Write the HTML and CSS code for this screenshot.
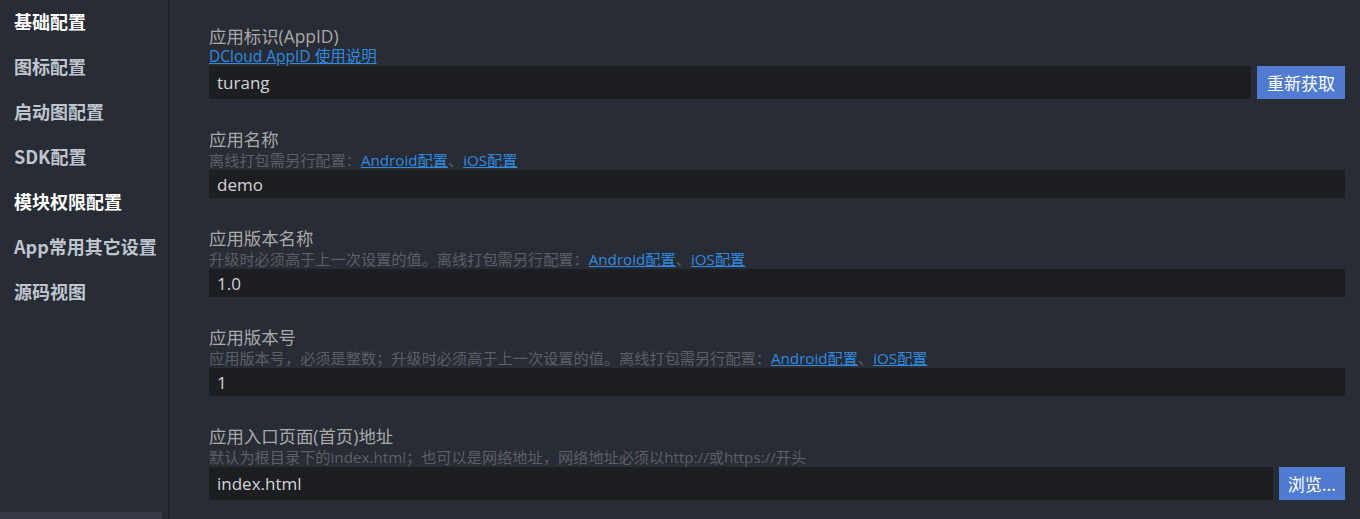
FILE: index.html
```html
<!DOCTYPE html>
<html lang="zh-CN">
<head>
    <meta charset="UTF-8">
    <meta name="viewport" content="width=device-width, initial-scale=1.0">
    <title>manifest.json</title>
    <link rel="stylesheet" href="styles.css">
</head>
<body>
    <div class="layout">
        <!-- Left navigation -->
        <nav class="sidebar">
            <ul class="nav">
                <li class="active">基础配置</li>
                <li>图标配置</li>
                <li>启动图配置</li>
                <li>SDK配置</li>
                <li class="active">模块权限配置</li>
                <li>App常用其它设置</li>
                <li>源码视图</li>
            </ul>
            <div class="scroll-thumb"></div>
        </nav>

        <!-- Settings form -->
        <main class="content">
            <div class="field">
                <div class="field-title first">应用标识(AppID)</div>
                <div class="field-desc first"><a href="#">DCloud AppID 使用说明</a></div>
                <div class="field-row">
                    <input class="tall" type="text" value="turang">
                    <button>重新获取</button>
                </div>
            </div>

            <div class="field">
                <div class="field-title">应用名称</div>
                <div class="field-desc">离线打包需另行配置：<a href="#">Android配置</a>、<a href="#">iOS配置</a></div>
                <div class="field-row">
                    <input type="text" value="demo">
                </div>
            </div>

            <div class="field">
                <div class="field-title">应用版本名称</div>
                <div class="field-desc">升级时必须高于上一次设置的值。离线打包需另行配置：<a href="#">Android配置</a>、<a href="#">iOS配置</a></div>
                <div class="field-row">
                    <input type="text" value="1.0">
                </div>
            </div>

            <div class="field">
                <div class="field-title">应用版本号</div>
                <div class="field-desc">应用版本号，必须是整数；升级时必须高于上一次设置的值。离线打包需另行配置：<a href="#">Android配置</a>、<a href="#">iOS配置</a></div>
                <div class="field-row">
                    <input type="text" value="1">
                </div>
            </div>

            <div class="field">
                <div class="field-title">应用入口页面(首页)地址</div>
                <div class="field-desc">默认为根目录下的index.html；也可以是网络地址，网络地址必须以http://或https://开头</div>
                <div class="field-row">
                    <input class="tall" type="text" value="index.html">
                    <button class="browse">浏览...</button>
                </div>
            </div>
        </main>
    </div>
</body>
</html>
```

FILE: styles.css
```css
body {
    margin: 0;
    padding: 0;
    background-color: #282c34;
    font-family: "Open Sans", "Noto Sans CJK SC", sans-serif;
    overflow: hidden;
}
.layout {
    display: flex;
    height: 519px;
}
.sidebar {
    width: 168px;
    flex-shrink: 0;
    border-right: 1px solid #1c1f24;
    display: flex;
    flex-direction: column;
}
.nav {
    list-style: none;
    margin: 0;
    padding: 0;
}
.nav li {
    padding: 9px 0 12px 14px;
    line-height: 24px;
    font-size: 18px;
    font-weight: bold;
    color: #bfc5cf;
    font-family: "Noto Sans CJK SC", sans-serif;
}
.nav li.active {
    color: #ffffff;
}
.scroll-thumb {
    margin-top: auto;
    width: 162px;
    height: 7px;
    background-color: #363b47;
}
.content {
    flex: 1;
    padding: 26px 15px 0 40px;
}
.field {
    margin-bottom: 29px;
}
.field-title {
    font-size: 17.4px;
    line-height: 22px;
    color: #a9a9a9;
}
.field-title.first {
    line-height: 21px;
}
.field-desc {
    font-size: 15.2px;
    line-height: 20px;
    color: #5c5f66;
    white-space: nowrap;
}
.field-desc.first {
    font-size: 15.5px;
    line-height: 19px;
}
.field-desc a {
    color: #2f8ae0;
    text-decoration: underline;
}
.field-row {
    display: flex;
    gap: 6px;
}
input {
    flex: 1;
    min-width: 0;
    height: 28px;
    box-sizing: border-box;
    border: none;
    outline: none;
    padding: 0 8px;
    background-color: #1d1e22;
    color: #d4d4d4;
    font-family: "Open Sans", "Noto Sans CJK SC", sans-serif;
    font-size: 17px;
}
input.tall {
    height: 33px;
}
button {
    height: 33px;
    padding: 0 10px;
    border: none;
    background-color: #4f7bd1;
    color: #ffffff;
    font-family: "Noto Sans CJK SC", sans-serif;
    font-size: 17px;
    cursor: pointer;
}
button.browse {
    padding: 0 9px;
}
button:hover {
    background-color: #5a86dc;
}
```
